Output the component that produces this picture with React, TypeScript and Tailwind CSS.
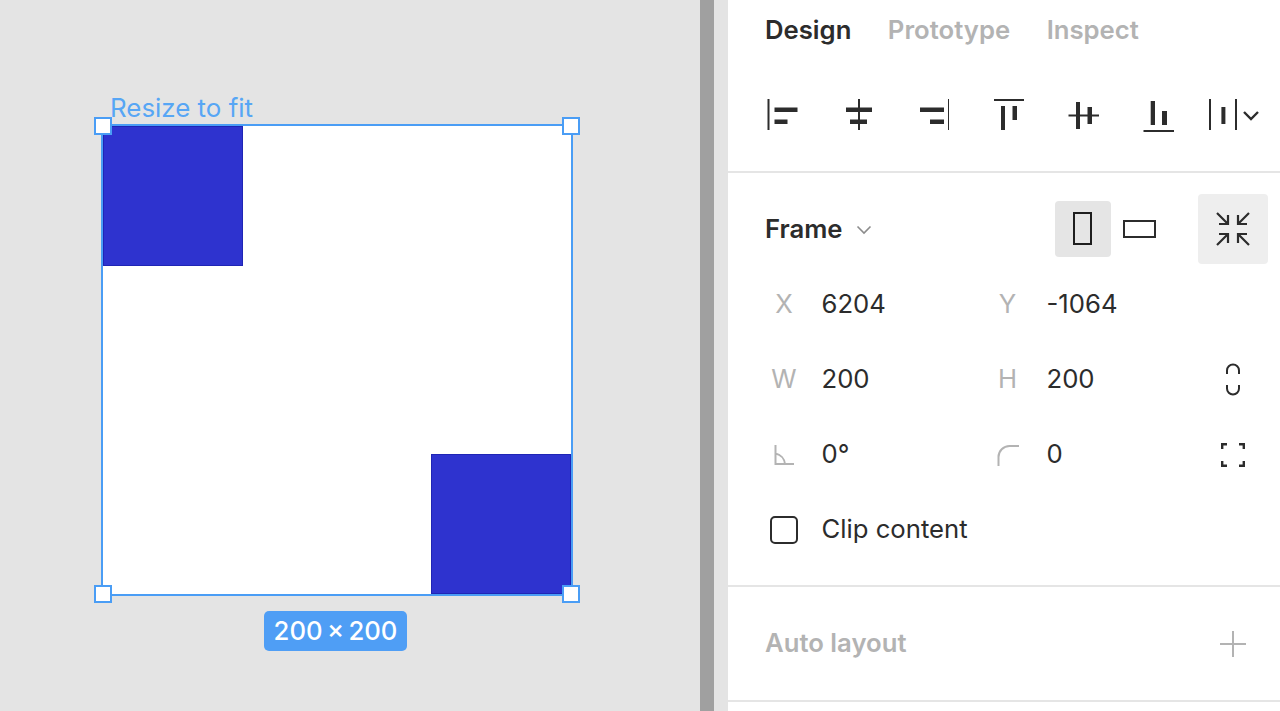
const stroke = '#2c2c2c'
const gray = '#b3b3b3'

function Handle({ className }: { className: string }) {
  return <div className={`absolute w-[18px] h-[18px] bg-white border-2 border-[#4a9df5] ${className}`} />
}

// alignment icons, all 32px tall
function AlignIcons() {
  return (
    <div className="flex items-start gap-[43px] pl-[39px] pt-[38px] h-[113px] border-b-2 border-[#e5e5e5]">
      <svg width="32" height="34" viewBox="0 0 32 34" fill={stroke}>
        <rect x="0.5" y="1" width="2" height="31" />
        <rect x="7.500" y="9.500" width="23" height="4.500" />
        <rect x="7.500" y="21.500" width="13" height="4.500" />
      </svg>
      <svg width="32" height="34" viewBox="0 0 32 34" fill={stroke}>
        <rect x="16" y="1" width="2" height="31" />
        <rect x="4" y="9.500" width="26" height="4.500" />
        <rect x="8" y="21.500" width="17" height="4.500" />
      </svg>
      <svg width="32" height="34" viewBox="0 0 32 34" fill={stroke}>
        <rect x="31" y="1" width="2" height="31" />
        <rect x="3" y="9.500" width="24" height="4.500" />
        <rect x="13" y="21.500" width="14" height="4.500" />
      </svg>
      <svg width="32" height="34" viewBox="0 0 32 34" fill={stroke}>
        <rect x="2" y="1" width="31" height="2" />
        <rect x="9" y="8" width="4" height="24" />
        <rect x="20.500" y="8" width="4.500" height="14" />
      </svg>
      <svg width="32" height="34" viewBox="0 0 32 34" fill={stroke}>
        <rect x="1.500" y="16.500" width="31" height="2" />
        <rect x="9" y="4" width="4" height="27" />
        <rect x="20.500" y="9" width="4.500" height="17" />
      </svg>
      <svg width="32" height="34" viewBox="0 0 32 34" fill={stroke}>
        <rect x="1.500" y="32" width="31" height="2" />
        <rect x="8.700" y="3" width="4.300" height="24" />
        <rect x="20" y="13" width="5" height="14" />
      </svg>
      <svg width="52" height="34" viewBox="0 0 52 34" fill={stroke} className="-ml-[8px]">
        <rect x="0" y="1" width="2" height="31" />
        <rect x="12.400" y="9" width="4" height="17" />
        <rect x="26" y="1" width="2" height="31" />
        <path d="M35 14l7 7 7-7" fill="none" stroke={stroke} strokeWidth="2.400" />
      </svg>
    </div>
  )
}

function Field({ label, value, label2, value2, right }: { label: React.ReactNode; value: string; label2: React.ReactNode; value2: string; right: React.ReactNode }) {
  return (
    <div className="flex items-center h-[75px] text-[25.7px] text-[#2c2c2c]">
      <div className="w-[40px] ml-[36px] flex justify-center text-[#b3b3b3]">{label}</div>
      <div className="ml-[17.5px] w-[166px]">{value}</div>
      <div className="w-[40px] flex justify-center text-[#b3b3b3]">{label2}</div>
      <div className="ml-[19px] w-[166px]">{value2}</div>
      <div className="w-[40px] flex justify-center">{right}</div>
    </div>
  )
}

export default function App() {
  return (
    <div className="flex w-[1280px] h-[711px] overflow-hidden bg-white font-['Inter',sans-serif]">
      {/* CANVAS */}
      <div className="relative w-[700px] bg-[#e4e4e4]">
        <div className="absolute left-[110px] top-[92px] text-[25.9px] leading-[32px] text-[#57a6f5]">Resize to fit</div>
        <div className="absolute left-[101px] top-[124px] w-[472px] h-[472px] bg-white border-2 border-[#4a9df5]">
          <div className="absolute left-0 top-0 w-[140px] h-[140px] bg-[#2e33cf] border border-[#1f25b5]" />
          <div className="absolute right-0 bottom-0 w-[140px] h-[140px] bg-[#2e33cf] border border-[#1f25b5]" />
        </div>
        <Handle className="left-[94px] top-[117px]" />
        <Handle className="left-[562px] top-[117px]" />
        <Handle className="left-[94px] top-[585px]" />
        <Handle className="left-[562px] top-[585px]" />
        <div className="absolute left-[264px] top-[611px] w-[143px] h-[40px] rounded-[5px] bg-[#4f9ef5] flex items-center justify-center text-white text-[25.7px] font-medium [word-spacing:-2.5px]">
          200 × 200
        </div>
      </div>

      {/* SCROLLBAR */}
      <div className="w-[14px] bg-[#a0a0a0]" />
      <div className="w-[14px] bg-[#e4e4e4]" />

      {/* PANEL */}
      <div className="flex-1 bg-white">
        <div className="flex items-center gap-[36.5px] pl-[37px] h-[60px] text-[25.7px] font-semibold text-[#b3b3b3]">
          <span className="text-[#2c2c2c]">Design</span>
          <span>Prototype</span>
          <span>Inspect</span>
        </div>
        <AlignIcons />

        <div className="border-b-2 border-[#e5e5e5] pb-[18px]">
          <div className="flex items-center h-[94px] pt-[19px] pl-[37px] text-[#2c2c2c]">
            <span className="text-[25.7px] font-semibold">Frame</span>
            <svg width="16" height="10" viewBox="0 0 16 10" fill="none" stroke="#8c8c8c" strokeWidth="1.600" className="ml-[13px]">
              <path d="M1.500 1.500L8 8l6.500-6.500" />
            </svg>
            <div className="ml-[183px] mb-[2px] w-[56px] h-[56px] rounded-[4px] bg-[#e5e5e5] flex items-center justify-center">
              <div className="w-[19px] h-[33px] border-[2.5px] border-[#1e1e1e]" />
            </div>
            <div className="ml-[12px] mb-[2px] w-[33px] h-[18px] border-[2.5px] border-[#2c2c2c]" />
            <div className="ml-[42px] mb-[2px] w-[70px] h-[70px] rounded-[4px] bg-[#eeeeee] flex items-center justify-center">
              <svg width="34" height="34" viewBox="0 0 34 34" fill="none" stroke={stroke} strokeWidth="2.200">
                <path d="M1 1l11 11M3 12h9V3M33 1L22 12M31 12h-9V3M1 33l11-11M3 22h9v9M33 33L22 22M31 22h-9v9" />
              </svg>
            </div>
          </div>
          <Field
            label="X"
            value="6204"
            label2="Y"
            value2="-1064"
            right={<span />}
          />
          <Field
            label="W"
            value="200"
            label2="H"
            value2="200"
            right={
              <svg width="16" height="33" viewBox="0 0 16 33" fill="none" stroke={stroke} strokeWidth="2">
                <path d="M2 11V7.500a6 6 0 0 1 12 0V11M2 22v3.500a6 6 0 0 0 12 0V22" />
              </svg>
            }
          />
          <Field
            label={
              <svg width="20" height="20" viewBox="0 0 20 20" fill="none" stroke={gray} strokeWidth="2">
                <path d="M1.500 0v19H20M1.500 8.500c5 1 9 5 9.500 10.500" />
              </svg>
            }
            value="0°"
            label2={
              <svg width="22" height="22" viewBox="0 0 22 22" fill="none" stroke={gray} strokeWidth="2">
                <path d="M1.500 22v-9A11 11 0 0 1 12.500 2H22" />
              </svg>
            }
            value2="0"
            right={
              <svg width="24" height="24" viewBox="0 0 24 24" fill="none" stroke={stroke} strokeWidth="2.400">
                <path d="M1.200 6V1.200H6M18 1.200h4.800V6M1.200 18v4.800H6M18 22.800h4.800V18" />
              </svg>
            }
          />
          <div className="flex items-center h-[75px] text-[25.7px] text-[#2c2c2c]">
            <div className="ml-[42px] w-[28px] h-[28px] rounded-[5px] border-2 border-[#2c2c2c]" />
            <span className="ml-[23.5px]">Clip content</span>
          </div>
        </div>

        <div className="flex items-center justify-between h-[115px] pl-[37px] pr-[34px] border-b-2 border-[#e5e5e5]">
          <span className="text-[25.7px] font-semibold text-[#b3b3b3]">Auto layout</span>
          <svg width="26" height="26" viewBox="0 0 26 26" stroke={gray} strokeWidth="2">
            <path d="M13 0v26M0 13h26" />
          </svg>
        </div>
      </div>
    </div>
  )
}
